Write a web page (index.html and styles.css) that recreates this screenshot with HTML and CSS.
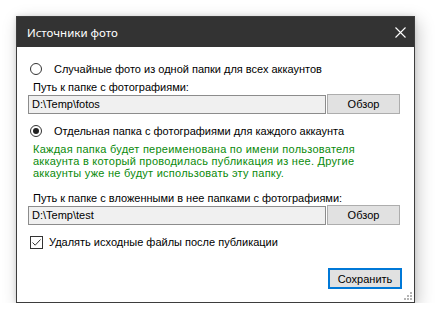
FILE: index.html
```html
<!DOCTYPE html>
<html lang="ru">
<head>
<meta charset="utf-8">
<title>Источники фото</title>
<link rel="stylesheet" href="styles.css">
</head>
<body>
<div class="stage">
  <div class="window">
    <div class="titlebar">
      <span class="title">Источники фото</span>
      <svg class="close" width="11" height="11" viewBox="0 0 11 11"><path d="M0.5 0.5 L10.5 10.5 M10.5 0.5 L0.5 10.5" stroke="#fff" stroke-width="1.1" fill="none"/></svg>
    </div>
    <div class="client">
      <div class="option">
        <span class="radio"></span>
        <span class="option-text">Случайные фото из одной папки для всех аккаунтов</span>
      </div>
      <div class="label">Путь к папке с фотографиями:</div>
      <div class="path-row">
        <div class="textbox">D:\Temp\fotos</div>
        <div class="btn">Обзор</div>
      </div>
      <div class="option option-2">
        <span class="radio checked"></span>
        <span class="option-text">Отдельная папка с фотографиями для каждого аккаунта</span>
      </div>
      <div class="note">Каждая папка будет переименована по имени пользователя<br>аккаунта в который проводилась публикация из нее. Другие<br>аккаунты уже не будут использовать эту папку.</div>
      <div class="label label-2">Путь к папке с вложенными в нее папками с фотографиями:</div>
      <div class="path-row">
        <div class="textbox">D:\Temp\test</div>
        <div class="btn">Обзор</div>
      </div>
      <div class="check-row">
        <svg class="checkbox" width="13" height="13" viewBox="0 0 13 13"><rect x="0.5" y="0.5" width="12" height="12" fill="#fff" stroke="#333"/><path d="M2.5 6.5 L5.2 9.2 L10.5 3.5" stroke="#333" stroke-width="1" fill="none"/></svg>
        <span class="option-text">Удалять исходные файлы после публикации</span>
      </div>
      <div class="footer">
        <div class="btn btn-default">Сохранить</div>
      </div>
      <svg class="grip" width="8" height="8" viewBox="0 0 8 8" fill="#b4b4b4">
        <rect x="6" y="0" width="2" height="2"/>
        <rect x="3" y="3" width="2" height="2"/><rect x="6" y="3" width="2" height="2"/>
        <rect x="0" y="6" width="2" height="2"/><rect x="3" y="6" width="2" height="2"/><rect x="6" y="6" width="2" height="2"/>
      </svg>
    </div>
  </div>
</div>
</body>
</html>
```
FILE: styles.css
```css
html, body {
  margin: 0;
  background: #fff;
}
body {
  font-family: "Liberation Sans", Arial, sans-serif;
  font-size: 11px;
  color: #000;
}
.stage {
  padding: 16px 0 0 16px;
}
.window {
  width: 399px;
  height: 287px;
  box-sizing: border-box;
  border: 1px solid #3d3d3d;
  background: #fff;
  display: flex;
  flex-direction: column;
  box-shadow: 3px 5px 16px rgba(0,0,0,0.22), 0 0 5px rgba(0,0,0,0.12);
}
.titlebar {
  height: 30px;
  flex: none;
  background: #333333;
  color: #fff;
  display: flex;
  align-items: center;
  justify-content: space-between;
  padding: 0 8px 0 10px;
  font-family: "Noto Sans", "Segoe UI", sans-serif;
  font-size: 11.5px;
}
.close {
  display: block;
}
.client {
  flex: 1;
  position: relative;
  padding: 14px 13px 0 11px;
}
.option, .check-row {
  height: 16px;
  display: flex;
  align-items: center;
}
.radio {
  width: 12px;
  height: 12px;
  box-sizing: border-box;
  border: 1px solid #333;
  border-radius: 50%;
  margin-left: 2px;
  margin-right: 12px;
  display: flex;
  align-items: center;
  justify-content: center;
}
.radio.checked::after {
  content: "";
  width: 6px;
  height: 6px;
  border-radius: 50%;
  background: #222;
}
.label {
  margin-top: 3px;
  padding-left: 5px;
  line-height: 14px;
  height: 14px;
}
.label-2 {
  margin-top: 12px;
}
.path-row {
  display: flex;
  align-items: flex-end;
  gap: 1px;
  height: 20px;
}
.textbox {
  width: 298px;
  height: 19px;
  box-sizing: border-box;
  border: 1px solid #8c8c8c;
  background: #f0f0f0;
  padding-left: 3px;
  line-height: 17px;
}
.btn {
  width: 73px;
  height: 20px;
  box-sizing: border-box;
  border: 1px solid #adadad;
  background: #e1e1e1;
  display: flex;
  align-items: center;
  justify-content: center;
}
.option-2 {
  margin-top: 9px;
}
.note {
  margin-top: 4px;
  padding-left: 5px;
  line-height: 12px;
  letter-spacing: 0.25px;
  color: #0a8a0a;
}
.check-row {
  margin-top: 9px;
}
.checkbox {
  margin-left: 2px;
  margin-right: 6px;
  display: block;
}
.footer {
  margin-top: 18px;
  display: flex;
  justify-content: flex-end;
  margin-right: -1px;
}
.btn-default {
  width: 74px;
  height: 21px;
  border: 2px solid #0078d7;
}
.grip {
  position: absolute;
  right: 2px;
  bottom: 2px;
  display: block;
}
```
